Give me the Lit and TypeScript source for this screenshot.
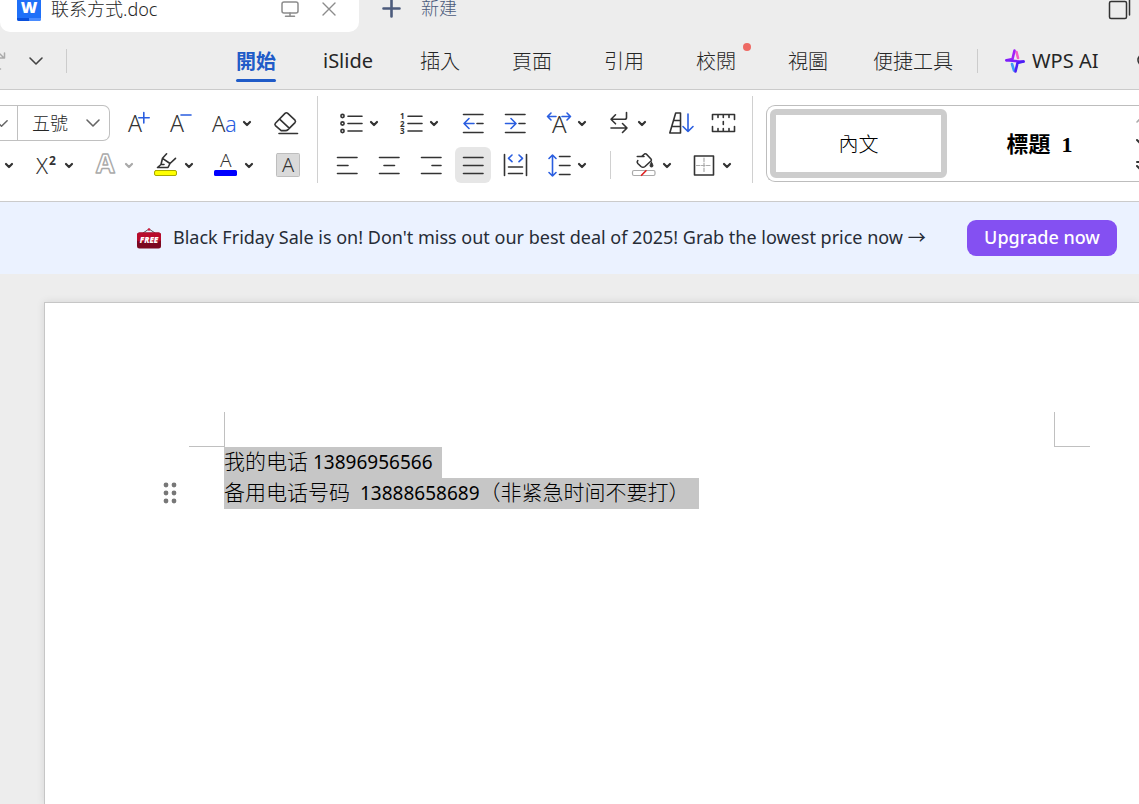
import { LitElement, html, svg, css, nothing, SVGTemplateResult } from "lit";
import { customElement, property, state } from "lit/decorators.js";
import { classMap } from "lit/directives/class-map.js";

const ICONS: Record<string, SVGTemplateResult> = {
  grow: svg`<text x="2" y="21" font-size="23">A</text><path class="b" d="M17.8 1.5v10.4M12.8 6.7h10.4"/>`,
  shrink: svg`<text x="2" y="21" font-size="23">A</text><path class="b" d="M13 4h10"/>`,
  case: svg`<text x="0" y="21" font-size="22">A</text><text class="bt" x="13" y="21" font-size="22">a</text>`,
  eraser: svg`<path d="M13.8 2.4 21 9.2q1 1.2 0 2.4l-7 7q-1 1-2.400 1H7.200L1.400 14.600q-1-1.200 0-2.400l9.600-9.800q1.400-1.300 2.800 0ZM5.600 8.200l9.600 9"/><path d="M5 22.500h18.500"/>`,
  sup: svg`<text x="2" y="21" font-size="22">X</text><text class="bold" x="15" y="12" font-size="12">2</text>`,
  outline: svg`<text class="hollow" x="2" y="20" font-size="27">A</text>`,
  marker: svg`<path d="M12.600.800 8.500 5.300 7 11.500 3.500 14.500H14l2-4 5.500-5.200M8.500 5.300l7.500 5.200M7 11.500l3 0"/><rect x=".5" y="17.500" width="22" height="5" rx="1.500" fill="#ff0" stroke="#a8a800" stroke-width="1"/>`,
  color: svg`<text x="6" y="14" font-size="19">A</text><rect x="0" y="17" width="23" height="6" rx="1.500" fill="#00f" stroke="none"/>`,
  shade: svg`<rect x=".5" y=".5" width="23" height="23" rx="1" fill="#dadada" stroke="#bebebe" stroke-width="1"/><text x="6" y="19" font-size="20">A</text>`,
  bullets: svg`<circle cx="3.500" cy="5" r="1.600"/><circle cx="3.500" cy="12.500" r="1.600"/><circle cx="3.500" cy="20" r="1.600"/><path d="M9 5.300h14M9 12.500h14M9 20h14"/>`,
  numbers: svg`<text class="bold" font-size="8"><tspan x="1" y="8">1</tspan><tspan x="1" y="15.500">2</tspan><tspan x="1" y="23">3</tspan></text><path d="M9 5.300h14M9 12.500h14M9 20h14"/>`,
  outdent: svg`<path d="M2.500 3.500H22M2.500 21.500H22M16 12.500h6"/><path class="b" d="M13 12.500H3M8 7.500l-5 5 5 5"/>`,
  indent: svg`<path d="M2.500 3.500H22M2.500 21.500H22M16 12.500h6"/><path class="b" d="M2.500 12.500h10M8 7.500l5 5-5 5"/>`,
  scale: svg`<text x="5" y="22" font-size="24">A</text><path class="b" d="M9 5.500H.500M4 2 .500 5.500 4 9M15 5.500h8.500M20 2l3.500 3.500L20 9"/>`,
  direction: svg`<path d="M19.500 1.500v5q0 1.800-1.800 1.800H4M8.500 3.800 4 8.300l4.500 4.500M4 17h16M15.500 12.500 20 17l-4.500 4.500"/>`,
  sort: svg`<path d="M.800 22 6.700 2h4.800v20ZM4.500 9.500h7M2.800 15.500h8.700"/><path class="b" d="M19 3v17.500M14 15.500l5 5 5-5"/>`,
  ruler: svg`<path d="M1.500 8.500v-5h22v5M1.500 15.500v5h22v-5M7 3.500v3M12.300 3.500v3M18 3.500v3M7 20.500v-3M12.300 20.500v-3M18 20.500v-3M12.300 10.500v3"/>`,
  left: svg`<path d="M2.500 4.500H22M2.500 12.500H13M2.500 20.500H22"/>`,
  center: svg`<path d="M2.500 4.500H22M7 12.500H17.500M2.500 20.500H22"/>`,
  right: svg`<path d="M2.500 4.500H22M13 12.500h9M2.500 20.500H22"/>`,
  justify: svg`<path d="M2.500 4.500H22M2.500 12.500H22M2.500 20.500H22"/>`,
  distribute: svg`<path d="M1.500 1.500v21M23.500 1.500v21M5.500 14h14M5.500 20.500h14"/><path class="b" d="M9 2 5.500 5.300 9 8.600M16 2l3.500 3.300L16 8.600"/>`,
  spacing: svg`<path d="M12.500 3.500h10.500M12.500 12.500h10.500M12.500 21.500h10.500"/><path class="b" d="M5.500 2v21M2 5.500 5.500 2 9 5.500M2 19.500l3.500 3.500L9 19.500"/>`,
  fill: svg`<path d="M5.300 3.500H12M9.500 3.500 12.500 1q1-.600 2 .200L19 6q.800 1 0 2l-6 5.500q-2 1.600-4 0L5.800 10.500q-1.300-1.500 0-3"/><path d="M19.500 9.200q3 4.800 0 4.800t0-4.800Z" fill="#333" stroke-width="1"/><rect x=".5" y="17.500" width="22.500" height="5" rx="1.500" stroke="#aaa" stroke-width="1.200"/><path d="M14 17.700 9.500 22.300" stroke="#e02020"/>`,
  border: svg`<rect x="2.500" y="3" width="19" height="19"/><path d="M12 5v15M4.500 12.500h15" stroke="#aaa" stroke-width="1.200" stroke-dasharray="3.500 1.500"/>`,
};

@customElement("tool-button")
class ToolButton extends LitElement {
  @property() icon = "";
  @property() label = "";
  @property({ type: Boolean }) split = false;
  @property({ type: Boolean }) active = false;
  @property({ type: Boolean }) muted = false;

  static styles = css`
    :host { display: block; flex: none; }
    .tool {
      display: flex; align-items: center; gap: 5px;
      width: 36px; height: 36px; padding: 0 6px;
      border: 0; border-radius: 6px; background: none; color: #333;
    }
    .tool.split { width: 54px; }
    .tool.bare { width: 22px; padding: 0 3px; }
    .tool:hover, .tool.active { background: #e6e6e6; }
    .tool.muted { color: #aaa; }
    svg { display: block; flex: none; overflow: visible; fill: none; stroke: currentColor; stroke-width: 1.6; stroke-linecap: round; stroke-linejoin: round; }
    text { fill: currentColor; stroke: none; font-family: "Noto Sans", sans-serif; font-weight: 350; }
    .b { stroke: #2a5ee0; }
    .bt { fill: #2a5ee0; }
    .bold { font-weight: 700; }
    .hollow { fill: #fff; stroke: currentColor; stroke-width: 1.4; font-weight: 700; }
    .arrow { stroke-width: 2.2; }
  `;

  render() {
    const bare = !this.icon;
    return html`<button
      class=${classMap({ tool: true, split: this.split, active: this.active, muted: this.muted, bare })}
      aria-label=${this.label} aria-pressed=${this.active}>
      ${bare ? nothing : html`<svg width="24" height="24" viewBox="0 0 24 24">${ICONS[this.icon]}</svg>`}
      ${this.split || bare
        ? html`<svg class="arrow" width="12" height="12" viewBox="0 0 12 12"><path d="M3 5l3 3 3-3"/></svg>`
        : nothing}
    </button>`;
  }
}

const TABS = ["開始", "iSlide", "插入", "頁面", "引用", "校閱", "視圖", "便捷工具"];

@customElement("app-root")
class AppRoot extends LitElement {
  @state() private tab = "開始";

  static styles = css`
    :host {
      display: flex; flex-direction: column; min-height: 100vh; overflow: hidden;
      background: #ededed; color: #262626;
      font-family: "Noto Sans", "Noto Sans CJK TC", sans-serif; font-size: 20px; font-weight: 300;
    }
    * { box-sizing: border-box; }
    button, select { font: inherit; color: inherit; background: none; border: 0; padding: 0; margin: 0; }
    svg { display: block; flex: none; fill: none; stroke: currentColor; stroke-linecap: round; stroke-linejoin: round; }
    .plain { stroke: none; }
    .faint { color: #aaa; }

    .titlebar { display: flex; height: 32px; font-size: 18px; line-height: 18px; }
    .doc-tab {
      display: flex; align-items: center; width: 359px; padding: 0 22px 14px 17px;
      background: #fff; border-radius: 0 0 10px 10px;
    }
    .logo { margin-right: 10px; }
    .logo text { fill: #fff; font-weight: 800; font-size: 16px; font-family: "Open Sans", sans-serif; }
    .doc-name { flex: 1; font-family: "Noto Sans", "Noto Sans CJK SC", sans-serif; }
    .doc-actions { display: flex; gap: 22px; color: #8c8c8c; }
    .new-doc { display: flex; align-items: center; gap: 20px; padding: 0 0 16px 23px; color: #4c5b7c; }
    .restore { margin-left: auto; padding: 0 8px 12px 0; color: #333; }

    .menu { display: flex; align-items: center; height: 58px; border-bottom: 1px solid #cbcbcb; overflow: hidden; }
    .quick { display: flex; align-items: center; gap: 22px; width: 210px; flex: none; color: #444; }
    .rule { width: 1px; height: 24px; background: #ccc; flex: none; }
    .tabs { display: flex; align-self: stretch; margin-right: 5px; }
    .tab { position: relative; min-width: 92px; padding: 0 19px; white-space: nowrap; }
    .tab.latin { font-weight: 400; }
    .tab.current { color: #1f5bc8; font-weight: 600; }
    .tab.current::after {
      content: ""; position: absolute; left: 26px; right: 26px; bottom: 7px;
      height: 3px; border-radius: 2px; background: #1f5bc8;
    }
    .dot { position: absolute; top: 11px; right: 11px; width: 8px; height: 8px; border-radius: 50%; background: #ee6a64; }
    .ai { display: flex; align-items: center; gap: 7px; margin-left: 27px; font-weight: 400; white-space: nowrap; }
    .find { margin-left: auto; width: 3px; overflow: hidden; color: #333; }

    .toolbar { display: flex; padding: 6px 0 18px; background: #fff; border-bottom: 1px solid #cbcbcb; }
    .group { display: flex; flex-direction: column; gap: 6px; padding-top: 9px; flex: none; }
    .row { display: flex; align-items: center; gap: 8px; }
    .row.inset { padding-left: 4px; }
    .cluster { display: flex; gap: 6px; }
    .divider { width: 1px; margin: 0 11px; background: #d0d0d0; flex: none; }
    .minor { width: 1px; height: 28px; margin: 0 7px; background: #d0d0d0; }
    .combos { display: flex; height: 36px; margin-right: 2px; border: 1px solid #c0c0c0; border-left: 0; border-radius: 0 7px 7px 0; }
    .combo { display: grid; align-items: center; }
    .combo > * { grid-area: 1 / 1; }
    .combo select { appearance: none; height: 34px; width: 91px; padding-left: 14px; font-size: 18px; }
    .combo.face { width: 18px; grid-template-columns: 17px; overflow: hidden; border-right: 1px solid #c0c0c0; }
    .combo.face select { width: 17px; padding: 0; }
    .combo svg { justify-self: end; margin-right: 8px; color: #666; pointer-events: none; }

    .gallery {
      display: flex; flex: 1; gap: 4px; min-width: 0; height: 77px; margin: 9px 0 0 2px; padding: 3px; padding-right: 0;
      border: 1px solid #bdbdbd; border-right: 0; border-radius: 9px 0 0 9px; overflow: hidden;
    }
    .style { flex: none; width: 177px; border: 6px solid transparent; border-radius: 6px; color: #000; font-family: "Liberation Serif", "Noto Sans CJK TC", serif; white-space: pre; }
    .style.picked { border-color: #cdcdcd; }
    .style.heading { padding-bottom: 4px; font-size: 22px; font-weight: 700; }
    .scroller { display: flex; flex-direction: column; justify-content: space-around; margin-left: auto; width: 4px; overflow: hidden; color: #333; }

    .banner { display: flex; align-items: center; height: 72px; padding: 0 22px 0 137px; background: #ebf2ff; font-size: 18px; font-weight: 400; white-space: nowrap; }
    .banner-text { margin-left: 12px; padding-bottom: 4px; color: #262c36; text-decoration: none; }
    .free text { fill: #fff; stroke: none; font-family: "Open Sans", sans-serif; font-size: 8px; font-weight: 800; font-style: italic; }
    .upgrade { width: 150px; height: 36px; margin-left: auto; padding-bottom: 2px; border-radius: 9px; background: #8450f2; color: #fff; font-weight: 500; }

    .page {
      flex: 1; margin: 28px 0 0 44px; padding: 109px 49px 0 108px; background: #fff;
      border: 1px solid #c6c6c6; border-right: 0; border-bottom: 0; box-shadow: 0 0 8px #0000001a;
    }
    .marks { display: flex; justify-content: space-between; padding-left: 36px; }
    .mark { width: 36px; height: 35px; border: 0 solid #c0c0c0; border-bottom-width: 1px; }
    .mark.start { border-right-width: 1px; }
    .mark.end { border-left-width: 1px; }
    .line { display: grid; grid-template-columns: 71px auto; justify-content: start; margin: 0; line-height: 31px; font-size: 21px; color: #000; }
    .handle { width: 34px; height: 30px; color: #777; display: grid; place-items: center; }
    .picked-text { grid-column: 2; display: flex; height: 31px; padding-right: 9px; background: #c6c6c6; font-family: "Noto Sans CJK SC", sans-serif; line-height: 27px; white-space: pre; }
    .num { font-family: "Noto Sans", sans-serif; font-size: 19px; line-height: 31px; margin-left: 5px; font-weight: 400; }
    .num.wide { margin: 0 0 0 10px; }
  `;

  private chevron(size = 16) {
    return html`<svg width=${size} height=${size} viewBox="0 0 16 16" stroke-width="1.600"><path d="M2 5l6 6 6-6"/></svg>`;
  }

  private tool(icon: string, label: string, split = false, active = false, muted = false) {
    return html`<tool-button icon=${icon} label=${label} ?split=${split} ?active=${active} ?muted=${muted}></tool-button>`;
  }

  render() {
    return html`
      <header class="titlebar">
        <div class="doc-tab">
          <svg class="logo plain" width="24" height="24" viewBox="0 0 24 24">
            <rect width="24" height="24" rx="2" fill="#1f70f8"/><path d="M0 21h12v3H2q-2 0-2-2z" fill="#0a50dc"/><path d="M12 21h12v1q0 2-2 2H12z" fill="#4a8cff"/>
            <text x="12" y="16" text-anchor="middle">W</text>
          </svg>
          <span class="doc-name">联系方式.doc</span>
          <div class="doc-actions">
            <button aria-label="顯示"><svg width="18" height="18" viewBox="0 0 18 18" stroke-width="1.500"><rect x="1" y="2" width="16" height="11" rx="2"/><path d="M9 13v3M4.500 16.300h9"/></svg></button>
            <button aria-label="關閉"><svg width="16" height="16" viewBox="0 0 16 16" stroke-width="1.400"><path d="M2 2l12 12M14 2 2 14"/></svg></button>
          </div>
        </div>
        <button class="new-doc">
          <svg width="19" height="19" viewBox="0 0 19 19" stroke-width="2.600"><path d="M9.500 1.500v16M1.500 9.500h16"/></svg>新建
        </button>
        <button class="restore" aria-label="還原">
          <svg width="23" height="20" viewBox="0 0 23 20" stroke-width="1.500"><rect x="1.500" y="1.500" width="17" height="17" rx="1.500"/><path d="M21.500-2v17"/></svg>
        </button>
      </header>

      <nav class="menu">
        <div class="quick">
          <svg class="faint" width="6" height="20" viewBox="0 0 6 20" stroke-width="1.500"><path d="M4.500 2v5H0M0 3l4 4M0 18h.500"/></svg>
          ${this.chevron()}<span class="rule"></span>
        </div>
        <div class="tabs">
          ${TABS.map(t => html`<button class=${classMap({ tab: true, latin: /^[a-z]/i.test(t), current: t === this.tab })} @click=${() => (this.tab = t)}>${t}${t === "校閱" ? html`<span class="dot"></span>` : nothing}</button>`)}
        </div>
        <span class="rule"></span>
        <button class="ai">
          <svg width="20" height="24" viewBox="0 0 20 24" stroke-width="2.600">
            <path d="M11.500 3 13 9" stroke="#f45cc8"/><path d="M7 15l2 6.500" stroke="#3c9cf8"/>
            <path d="M1.500 11.300 7.500 10 9.500 1.500" stroke="#a020f8"/><path d="M1.500 11.300q8 1 17 1.200" stroke="#7a20fa"/><path d="M18.500 12.500 12.500 14l-2 8.500" stroke="#4a20f5"/>
          </svg>WPS AI
        </button>
        <button class="find" aria-label="搜尋"><svg width="16" height="16" viewBox="0 0 16 16" stroke-width="1.600"><circle cx="8" cy="7" r="6"/></svg></button>
      </nav>

      <section class="toolbar">
        <div class="group">
          <div class="row">
            <div class="combos">
              <label class="combo face"><select aria-label="字型"><option></option></select>${this.chevron(15)}</label>
              <label class="combo"><select aria-label="字型大小"><option>五號</option></select>${this.chevron()}</label>
            </div>
            <div class="cluster">${this.tool("grow", "放大字型")}${this.tool("shrink", "縮小字型")}</div>
            ${this.tool("case", "變更大小寫", true)}${this.tool("eraser", "清除格式")}
          </div>
          <div class="row">
            <div class="cluster">
              ${this.tool("", "更多")}${this.tool("sup", "上標", true)}${this.tool("outline", "文字效果", true, false, true)}
              ${this.tool("marker", "醒目提示", true)}${this.tool("color", "字型色彩", true)}
            </div>
            ${this.tool("shade", "字元網底")}
          </div>
        </div>
        <span class="divider"></span>
        <div class="group">
          <div class="row inset">
            <div class="cluster">${this.tool("bullets", "項目符號", true)}${this.tool("numbers", "編號", true)}</div>
            <div class="cluster">${this.tool("outdent", "減少縮排")}${this.tool("indent", "增加縮排")}</div>
            <div class="cluster">${this.tool("scale", "字元縮放", true)}${this.tool("direction", "文字方向", true)}</div>
            <div class="cluster">${this.tool("sort", "排序")}${this.tool("ruler", "定位點")}</div>
          </div>
          <div class="row">
            <div class="cluster">
              ${this.tool("left", "靠左")}${this.tool("center", "置中")}${this.tool("right", "靠右")}
              ${this.tool("justify", "左右對齊", false, true)}${this.tool("distribute", "分散對齊")}
            </div>
            ${this.tool("spacing", "行距", true)}
            <span class="minor"></span>
            <div class="cluster">${this.tool("fill", "網底", true)}${this.tool("border", "框線", true)}</div>
          </div>
        </div>
        <span class="divider"></span>
        <div class="gallery">
          <button class="style picked">內文</button>
          <button class="style heading">標題  1</button>
          <div class="scroller">
            <svg class="faint" width="12" height="8" viewBox="0 0 12 8" stroke-width="1.600"><path d="M2 6l4-4 4 4"/></svg>
            <svg width="12" height="8" viewBox="0 0 12 8" stroke-width="2"><path d="M2 2l4 4 4-4"/></svg>
            <svg width="12" height="10" viewBox="0 0 12 10" stroke-width="2"><path d="M2 1h8M2 5l4 4 4-4"/></svg>
          </div>
        </div>
      </section>

      <aside class="banner">
        <svg class="free" width="24" height="21" viewBox="0 0 24 21">
          <path d="M6 5l6-4 6 4" stroke="#555" stroke-width="1"/><circle cx="12" cy="1.500" r="1.300" fill="#d02040" stroke="none"/>
          <rect y="4.500" width="24" height="16" rx="2.500" fill="#7c0820" stroke="none"/><rect y="4.500" width="24" height="9" rx="2.500" fill="#b80c2c" stroke="none"/>
          <text x="12" y="15" text-anchor="middle">FREE</text>
        </svg>
        <a class="banner-text" href="#">Black Friday Sale is on! Don't miss out our best deal of 2025! Grab the lowest price now →</a>
        <button class="upgrade">Upgrade now</button>
      </aside>

      <main class="page">
        <div class="marks"><span class="mark start"></span><span class="mark end"></span></div>
        <p class="line"><span class="picked-text">我的电话<span class="num">13896956566</span></span></p>
        <p class="line">
          <button class="handle" aria-label="段落"><svg class="plain" width="14" height="22" viewBox="0 0 14 22">
            ${[3, 11, 19].map(y => svg`<circle cx="3" cy=${y} r="2.400" fill="#777"/><circle cx="11" cy=${y} r="2.400" fill="#777"/>`)}
          </svg></button>
          <span class="picked-text">备用电话号码<span class="num wide">13888658689</span>（非紧急时间不要打）</span>
        </p>
      </main>
    `;
  }
}
